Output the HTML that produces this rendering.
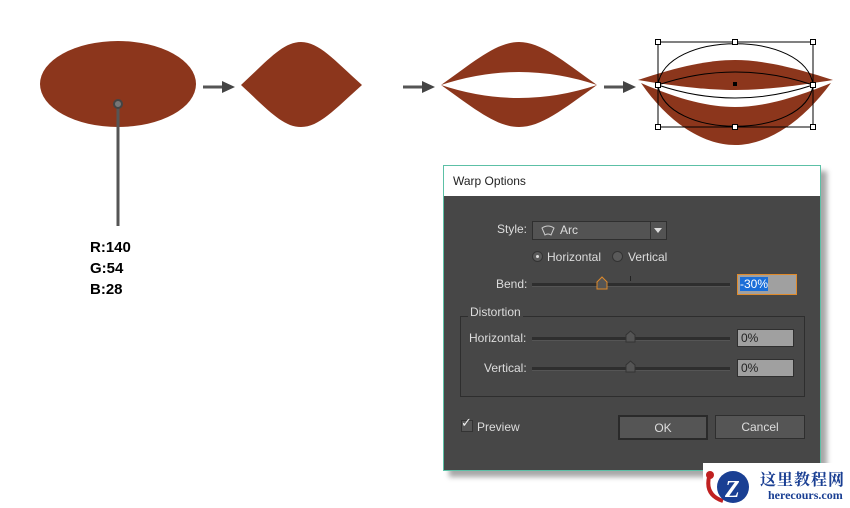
<!DOCTYPE html><html><head><style>
body{margin:0;width:850px;height:508px;background:#fff;position:relative;overflow:hidden;font-family:"Liberation Sans",sans-serif}
.a{position:absolute}
.dlg{left:443px;top:165px;width:376px;height:304px;border:1px solid #5cc0a6;background:#474747;box-shadow:6px 6px 5px rgba(0,0,0,.35)}
.tt{left:0;top:0;width:376px;height:30px;background:#fff;color:#222;font-size:12px;line-height:31px;text-indent:9px}
.l{color:#ddd;font-size:12px}
.trk{height:3px;background:#2e2e2e;border-bottom:1px solid #555}
.inp{background:#a0a0a0;border:1px solid #2f2f2f;color:#222;font-size:12px;line-height:16px;padding-left:3px;box-sizing:border-box}
.btn{background:#555;border:1px solid #2e2e2e;color:#ddd;font-size:12px;text-align:center;line-height:22px;box-sizing:border-box}
</style></head><body>
<svg class="a" style="left:0;top:0" width="850" height="508">
<g fill="#8c361c">
<ellipse cx="118" cy="84" rx="78" ry="43"/>
<path d="M241,85 C268,60 283,42 301,42 C319,42 334,60 362,85 C334,110 319,127 301,127 C283,127 268,110 241,85Z"/>
<path d="M441,85 C476,60 497,42 519,42 C541,42 562,60 597,85 C562,110 541,127 519,127 C497,127 476,110 441,85Z M441,85 Q519,111 597,85 Q519,59 441,85Z" fill-rule="evenodd"/>
<path d="M638,80 C680,66 710,60 735,60 C760,60 790,66 833,80 C790,87 760,90 735,90 C710,90 680,87 638,80Z"/>
<path d="M641,83 C680,100 710,107 735,107 C760,107 790,100 831,83 C800,125 765,145 735,145 C705,145 670,125 641,83Z"/>
</g>
<g stroke="#555" stroke-width="3" fill="#444">
<line x1="203" y1="87" x2="225" y2="87"/><path d="M222,81 L235,87 L222,93Z" stroke="none"/>
<line x1="403" y1="87" x2="425" y2="87"/><path d="M422,81 L435,87 L422,93Z" stroke="none"/>
<line x1="604" y1="87" x2="626" y2="87"/><path d="M623,81 L636,87 L623,93Z" stroke="none"/>
</g>
<line x1="118" y1="104" x2="118" y2="226" stroke="#555" stroke-width="3"/>
<circle cx="118" cy="104" r="4" fill="#777" stroke="#444" stroke-width="2"/>
<g fill="none" stroke="#000" stroke-width="1">
<rect x="658" y="42" width="155" height="85"/>
<path d="M658,85 C665,30 806,30 813,85 C806,140 665,140 658,85Z"/>
<path d="M658,85 Q735,59 813,85 Q735,111 658,85Z"/>
</g>
<g fill="#fff" stroke="#000">
<rect x="655.5" y="39.5" width="5" height="5"/><rect x="732.5" y="39.5" width="5" height="5"/><rect x="810.5" y="39.5" width="5" height="5"/>
<rect x="655.5" y="82.5" width="5" height="5"/><rect x="810.5" y="82.5" width="5" height="5"/>
<rect x="655.5" y="124.5" width="5" height="5"/><rect x="732.5" y="124.5" width="5" height="5"/><rect x="810.5" y="124.5" width="5" height="5"/>
</g>
<rect x="733" y="82" width="4" height="4" fill="#000"/>
<text x="90" y="252" font-size="15" font-weight="bold" fill="#000">R:140</text>
<text x="90" y="273" font-size="15" font-weight="bold" fill="#000">G:54</text>
<text x="90" y="294" font-size="15" font-weight="bold" fill="#000">B:28</text>
</svg>
<div class="a dlg">
<div class="a tt">Warp Options</div>
<div class="a l" style="left:53px;top:56px">Style:</div>
<div class="a" style="left:88px;top:55px;width:133px;height:17px;background:#535353;border:1px solid #2f2f2f"><span class="a l" style="left:27px;top:1px">Arc</span><svg class="a" style="left:8px;top:3px" width="14" height="11"><path d="M1,3 Q7,-1 13,3 L10,10 Q7,8 4,10Z" fill="none" stroke="#ccc"/></svg><div class="a" style="left:117px;top:0;width:1px;height:17px;background:#333"></div><div class="a" style="left:121px;top:6px;border:4px solid transparent;border-top:5px solid #ddd"></div></div>
<div class="a" style="left:88px;top:85px;width:9px;height:9px;border-radius:50%;background:#5a5a5a;border:1px solid #333"><div class="a" style="left:3px;top:3px;width:3px;height:3px;border-radius:50%;background:#ddd"></div></div>
<div class="a l" style="left:103px;top:84px">Horizontal</div>
<div class="a" style="left:168px;top:85px;width:9px;height:9px;border-radius:50%;background:#5a5a5a;border:1px solid #333"></div>
<div class="a l" style="left:184px;top:84px">Vertical</div>
<div class="a l" style="left:52px;top:111px">Bend:</div>
<div class="a trk" style="left:88px;top:117px;width:198px"></div>
<div class="a" style="left:186px;top:110px;width:1px;height:5px;background:#222"></div>
<svg class="a" style="left:152px;top:110px" width="12" height="14"><path d="M1,13 L1,6 L6,1 L11,6 L11,13Z" fill="#555" stroke="#e08a2a"/></svg>
<div class="a" style="left:293px;top:108px;width:58px;height:19px;border:1px solid #e08a2a;background:#a0a0a0"><span class="a" style="left:2px;top:2px;background:#1a6ed8;color:#fff;font-size:12px;line-height:14px">-30%</span></div>
<div class="a" style="left:16px;top:150px;width:343px;height:79px;border:1px solid #2e2e2e"></div>
<div class="a l" style="left:24px;top:139px;background:#474747;padding:0 2px">Distortion</div>
<div class="a l" style="left:25px;top:165px">Horizontal:</div>
<div class="a trk" style="left:88px;top:171px;width:198px"></div>
<svg class="a" style="left:181px;top:164px" width="11" height="13"><path d="M1,12 L1,5 L5.5,1 L10,5 L10,12Z" fill="#555" stroke="#333"/></svg>
<div class="a inp" style="left:293px;top:163px;width:57px;height:18px">0%</div>
<div class="a l" style="left:40px;top:195px">Vertical:</div>
<div class="a trk" style="left:88px;top:201px;width:198px"></div>
<svg class="a" style="left:181px;top:194px" width="11" height="13"><path d="M1,12 L1,5 L5.5,1 L10,5 L10,12Z" fill="#555" stroke="#333"/></svg>
<div class="a inp" style="left:293px;top:193px;width:57px;height:18px">0%</div>
<div class="a" style="left:17px;top:254px;width:10px;height:10px;border:1px solid #333;background:#555"></div>
<div class="a" style="left:17px;top:249px;color:#eee;font-size:13px">✓</div>
<div class="a l" style="left:33px;top:254px">Preview</div>
<div class="a btn" style="left:174px;top:249px;width:90px;height:25px;border:2px solid #2a2a2a">OK</div>
<div class="a btn" style="left:271px;top:249px;width:90px;height:24px">Cancel</div>
</div>
<div class="a" style="left:703px;top:463px;width:147px;height:45px;background:#fff"></div>
<svg class="a" style="left:703px;top:465px" width="50" height="40"><path d="M6,12 Q2,30 20,36" fill="none" stroke="#c02020" stroke-width="4"/><circle cx="7" cy="10" r="4" fill="#c02020"/><circle cx="30" cy="22" r="16" fill="#1a3f93"/><text x="22" y="32" font-size="24" font-weight="bold" fill="#fff" font-family="Liberation Serif,serif" font-style="italic">Z</text></svg>
<div class="a" style="left:760px;top:467px;font-family:'Liberation Serif','Noto Serif CJK SC',serif;font-weight:bold;font-size:16px;color:#1a3f93;letter-spacing:1px">这里教程网</div>
<div class="a" style="left:768px;top:488px;font-family:'Liberation Serif',serif;font-weight:bold;font-size:12px;color:#1a3f93">herecours.com</div>
</body></html>
